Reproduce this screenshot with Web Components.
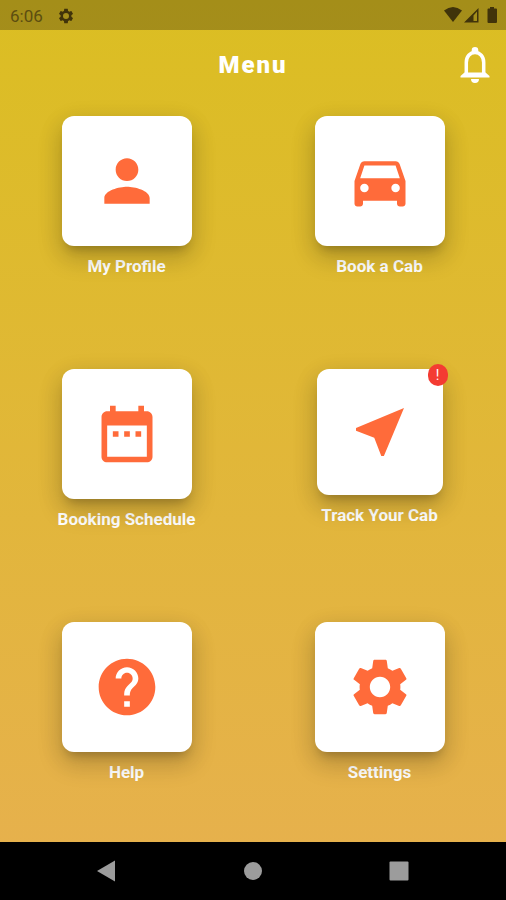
<!DOCTYPE html>
<html lang="en">
<head>
<meta charset="utf-8">
<meta name="viewport" content="width=device-width, initial-scale=1">
<title>Menu</title>
<style>
  body { margin: 0; font-family: Roboto, "Liberation Sans", sans-serif; }
</style>
</head>
<body>
<cab-screen>
  <status-bar slot="status" time="6:06"></status-bar>
  <app-header slot="header">Menu</app-header>
  <menu-tile icon="person">My Profile</menu-tile>
  <menu-tile icon="car">Book a Cab</menu-tile>
  <menu-tile icon="calendar">Booking Schedule</menu-tile>
  <menu-tile icon="near" badge="!">Track Your Cab</menu-tile>
  <menu-tile icon="help">Help</menu-tile>
  <menu-tile icon="settings">Settings</menu-tile>
  <nav-bar slot="nav"></nav-bar>
</cab-screen>

<script>
const GEAR = 'M19.14 12.94c.04-.3.06-.61.06-.94 0-.32-.02-.64-.07-.94l2.03-1.58c.18-.14.23-.41.12-.61l-1.92-3.32c-.12-.22-.37-.29-.59-.22l-2.39.96c-.5-.38-1.03-.7-1.62-.94l-.36-2.54c-.04-.24-.24-.41-.48-.41h-3.84c-.24 0-.43.17-.47.41l-.36 2.54c-.59.24-1.13.57-1.62.94l-2.39-.96c-.22-.08-.47 0-.59.22L2.74 8.87c-.12.21-.08.47.12.61l2.03 1.58c-.05.3-.09.63-.09.94s.02.64.07.94l-2.03 1.58c-.18.14-.23.41-.12.61l1.92 3.32c.12.22.37.29.59.22l2.39-.96c.5.38 1.03.7 1.62.94l.36 2.54c.05.24.24.41.48.41h3.84c.24 0 .44-.17.47-.41l.36-2.54c.59-.24 1.13-.56 1.62-.94l2.39.96c.22.08.47 0 .59-.22l1.92-3.32c.12-.22.07-.47-.12-.61l-2.01-1.58z';
const ICONS = {
  person: 'M12 12c2.21 0 4-1.79 4-4s-1.79-4-4-4-4 1.79-4 4 1.79 4 4 4zm0 2c-2.67 0-8 1.34-8 4v2h16v-2c0-2.66-5.33-4-8-4z',
  car: 'M18.92 6.01C18.72 5.42 18.16 5 17.5 5h-11c-.66 0-1.21.42-1.42 1.01L3 12v8c0 .55.45 1 1 1h1c.55 0 1-.45 1-1v-1h12v1c0 .55.45 1 1 1h1c.55 0 1-.45 1-1v-8l-2.08-5.99zM6.5 16c-.83 0-1.5-.67-1.5-1.5S5.67 13 6.5 13s1.5.67 1.5 1.5S7.33 16 6.5 16zm11 0c-.83 0-1.5-.67-1.5-1.5s.67-1.5 1.5-1.5 1.5.67 1.5 1.5-.67 1.5-1.5 1.5zM5 11l1.5-4.5h11L19 11H5z',
  calendar: 'M9 11H7v2h2v-2zm4 0h-2v2h2v-2zm4 0h-2v2h2v-2zm2-7h-1V2h-2v2H8V2H6v2H5c-1.11 0-1.99.9-1.99 2L3 20c0 1.1.89 2 2 2h14c1.1 0 2-.9 2-2V6c0-1.1-.9-2-2-2zm0 16H5V9h14v11z',
  near: 'M21 3L3 10.53v.98l6.84 2.65L12.48 21h.98L21 3z',
  help: 'M12 2C6.48 2 2 6.48 2 12s4.48 10 10 10 10-4.48 10-10S17.52 2 12 2zm1 17h-2v-2h2v2zm2.07-7.75l-.9.92C13.45 12.9 13 13.5 13 15h-2v-.5c0-1.1.45-2.1 1.17-2.83l1.24-1.26c.37-.36.59-.86.59-1.41 0-1.1-.9-2-2-2s-2 .9-2 2H8c0-2.21 1.79-4 4-4s4 1.79 4 4c0 .88-.36 1.68-.93 2.25z',
  settings: GEAR + 'M12 15.6c-1.98 0-3.6-1.62-3.6-3.6s1.62-3.6 3.6-3.6 3.6 1.62 3.6 3.6-1.62 3.6-3.6 3.6z'
};

class CabScreen extends HTMLElement {
  constructor() {
    super();
    this.attachShadow({ mode: 'open' }).innerHTML = `
      <style>
        :host { display: flex; flex-direction: column; min-height: 100vh; color: #fff;
          background: linear-gradient(#dbbe22, #e7b04f); }
        main { flex: 1; display: grid; grid-template-columns: 1fr 1fr; row-gap: 93px;
          padding-top: 16px; align-content: start; }
      </style>
      <slot name="status"></slot>
      <slot name="header"></slot>
      <main><slot></slot></main>
      <slot name="nav"></slot>`;
  }
}

class StatusBar extends HTMLElement {
  constructor() {
    super();
    this.attachShadow({ mode: 'open' }).innerHTML = `
      <style>
        :host { display: flex; align-items: center; height: 30px; padding: 0 8px 0 10px;
          background: rgba(0, 0, 0, .25); color: #5c4d10; font-size: 17px; line-height: 20px; }
        svg { display: block; fill: #40330a; }
        .time { flex: 1; display: flex; align-items: center; gap: 14px; padding-top: 2px; }
      </style>
      <div class="time"><span></span>
        <svg width="18" height="18" viewBox="0 0 24 24" aria-hidden="true"><path fill-rule="evenodd" d="${GEAR}M12 16a4 4 0 1 1 0-8a4 4 0 0 1 0 8z"/></svg>
      </div>
      <svg width="54" height="18" viewBox="0 0 54 18" aria-hidden="true">
        <path d="M0 4.5Q9-2.5 18 4.5L9 16z"/>
        <path fill-rule="evenodd" d="M20 16.5L34.5 2v14.5zM29.500 9.500v5.500H33V5.500z"/>
        <path d="M46 1h4v1.5h2q1 0 1 1V16q0 1-1 1h-7.5q-1 0-1-1V3.500q0-1 1-1H46z"/>
      </svg>`;
  }
  connectedCallback() {
    this.shadowRoot.querySelector('span').textContent = this.getAttribute('time');
  }
}

class AppHeader extends HTMLElement {
  constructor() {
    super();
    this.attachShadow({ mode: 'open' }).innerHTML = `
      <style>
        :host { display: grid; grid-template-columns: 1fr auto 1fr; align-items: center; height: 70px; padding: 0 14px; }
        h1 { grid-column: 2; margin: 0; font-size: 24px; line-height: 28px; font-weight: 900; letter-spacing: 2px; }
        button { justify-self: end; border: 0; padding: 0; background: none; color: inherit; cursor: pointer; }
        svg { display: block; }
      </style>
      <h1><slot></slot></h1>
      <button type="button" aria-label="Notifications">
        <svg width="34" height="40" viewBox="0 0 34 40" fill="none" stroke="currentColor" stroke-width="3.5">
          <path d="M8.3 30V17.5C8.3 11.5 12 7.5 17 7.5s8.7 4 8.7 10V30"/>
          <path d="M13.7 7V5.3a3.3 3.3 0 0 1 6.6 0V7zM6.5 27.5h21l4 3.500v1.500h-29V31zM13 34h8a4 4 0 0 1-8 0z" fill="currentColor" stroke="none"/>
        </svg>
      </button>`;
  }
}

class MenuTile extends HTMLElement {
  constructor() {
    super();
    this.attachShadow({ mode: 'open' }).innerHTML = `
      <style>
        :host { display: block; --size: 130px; --icon: 68px; }
        :host([badge]) { --size: 126px; --icon: 64px; }
        button { display: flex; flex-direction: column; align-items: center; gap: 10px; width: 100%; padding: 0; border: 0;
          background: none; color: inherit; font: 700 17px/20px Roboto, "Liberation Sans", sans-serif; cursor: pointer; }
        .card { position: relative; display: grid; place-items: center; width: var(--size); height: var(--size);
          border-radius: 12px; background: #fff; color: #ff6b3a;
          box-shadow: 0 8px 10px -5px rgba(0, 0, 0, .2), 0 12px 24px 2px rgba(0, 0, 0, .14), 0 6px 24px 2px rgba(0, 0, 0, .08); }
        svg { display: block; width: var(--icon); height: var(--icon); fill: currentColor; }
        .badge { position: absolute; top: -5px; right: -5px; width: 20px; border-radius: 10px;
          background: #f43b32; color: #fff; font-size: 14px; line-height: 22px; font-weight: 400; text-align: center; }
        .badge:empty { display: none; }
      </style>
      <button type="button">
        <span class="card">
          <svg viewBox="0 0 24 24" aria-hidden="true"><path/></svg>
          <span class="badge"></span>
        </span>
        <span><slot></slot></span>
      </button>`;
  }
  connectedCallback() {
    this.shadowRoot.querySelector('path').setAttribute('d', ICONS[this.getAttribute('icon')]);
    this.shadowRoot.querySelector('.badge').textContent = this.getAttribute('badge') || '';
  }
}

class NavBar extends HTMLElement {
  constructor() {
    super();
    this.attachShadow({ mode: 'open' }).innerHTML = `
      <style>
        :host { display: block; background: #000; }
        nav { display: grid; grid-template-columns: repeat(3, 1fr); place-items: center; height: 58px; padding: 0 34px; }
        button { width: 48px; height: 48px; padding: 0; border: 0; background: none; display: grid; place-items: center; cursor: pointer; }
        svg { display: block; fill: #9c9c9c; }
      </style>
      <nav aria-label="System">
        <button type="button" aria-label="Back"><svg width="22" height="22" viewBox="0 0 22 22"><path d="M1 11L19 .5v21z"/></svg></button>
        <button type="button" aria-label="Home"><svg width="22" height="22" viewBox="0 0 22 22"><circle cx="11" cy="11" r="9"/></svg></button>
        <button type="button" aria-label="Recents"><svg width="22" height="22" viewBox="0 0 22 22"><rect x="1.5" y="1.5" width="19" height="19" rx="1"/></svg></button>
      </nav>`;
  }
}

customElements.define('cab-screen', CabScreen);
customElements.define('status-bar', StatusBar);
customElements.define('app-header', AppHeader);
customElements.define('menu-tile', MenuTile);
customElements.define('nav-bar', NavBar);
</script>
</body>
</html>
